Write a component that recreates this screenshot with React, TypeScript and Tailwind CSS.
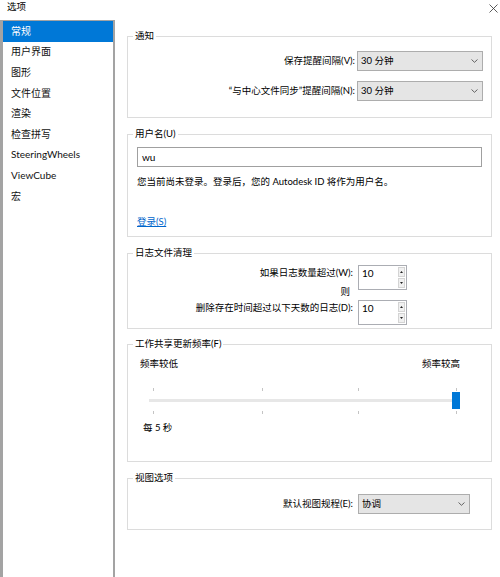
import { ReactNode } from "react";

const navItems = ["常规", "用户界面", "图形", "文件位置", "渲染", "检查拼写", "SteeringWheels", "ViewCube", "宏"];

function Chevron() {
  return (
    <svg width="7" height="4" viewBox="0 0 7 4" className="shrink-0">
      <path d="M0.5 0.5 L3.5 3.3 L6.5 0.5" fill="none" stroke="#555" strokeWidth="0.9" />
    </svg>
  );
}

function Combo({ value, className }: { value: string; className: string }) {
  return (
    <div className={`flex h-[20px] items-center justify-between border border-[#adadad] bg-[#e5e5e5] pl-[3px] pr-[4px] ${className}`}>
      <span className="leading-[14px]">{value}</span>
      <Chevron />
    </div>
  );
}

function SpinBox({ value }: { value: string }) {
  return (
    <div className="flex h-[25px] w-[49px] border border-[#abadb3] bg-white">
      <span className="flex-1 pl-[3px] text-[10px] leading-[14px]">{value}</span>
      <div className="my-[1px] mr-[1px] flex w-[7px] flex-col gap-[1px]">
        <div className="flex flex-1 items-center justify-center border border-[#d4d4d4] bg-[#f0f0f0]">
          <svg width="3" height="2" viewBox="0 0 3 2">
            <path d="M0 2 L1.5 0 L3 2 Z" fill="#222" />
          </svg>
        </div>
        <div className="flex flex-1 items-center justify-center border border-[#d4d4d4] bg-[#f0f0f0]">
          <svg width="3" height="2" viewBox="0 0 3 2">
            <path d="M0 0 L1.5 2 L3 0 Z" fill="#222" />
          </svg>
        </div>
      </div>
    </div>
  );
}

function Group({ title, className = "", children }: { title: string; className?: string; children: ReactNode }) {
  return (
    <fieldset className={`border border-[#dcdcdc] ${className}`}>
      <legend className="ml-[5px] px-[2px] leading-[14px]">{title}</legend>
      {children}
    </fieldset>
  );
}

const ticks = [4, 113, 209, 307];

export default function App() {
  return (
    <div className="flex h-[577px] w-[500px] flex-col overflow-hidden bg-white text-[9.5px] text-black font-['Lato','Noto_Sans_CJK_SC',sans-serif]">
      <div className="flex h-[20px] shrink-0 items-start justify-between">
        <span className="pl-[7px] leading-[14px]">选项</span>
        <svg width="9" height="9" viewBox="0 0 9 9" className="mr-[2px] mt-[4px]">
          <path d="M0.5 0.5 L8.5 8.5 M8.5 0.5 L0.5 8.5" stroke="#333" strokeWidth="0.8" />
        </svg>
      </div>

      <div className="flex min-h-0 flex-1">
        <aside className="w-[115px] shrink-0 border-t border-r-2 border-l-[3px] border-[#a3a3a3]">
          {navItems.map((item, i) => (
            <div
              key={item}
              className={`flex h-[20.6px] items-center pl-[8px] text-[10px] ${i === 0 ? "bg-[#0078d7] text-white" : "text-[#111]"}`}
            >
              {item}
            </div>
          ))}
        </aside>

        <main className="flex-1 pt-[9px] pr-[8px] pl-[12px]">
          <Group title="通知">
            <div className="flex flex-col gap-[10px] pt-[8px] pb-[16px]">
              <div className="flex items-center">
                <span className="w-[227px] text-right leading-[14px]">保存提醒间隔(V):</span>
                <Combo value="30 分钟" className="ml-[2px] w-[126px]" />
              </div>
              <div className="flex items-center">
                <span className="w-[227px] text-right leading-[14px]">“与中心文件同步”提醒间隔(N):</span>
                <Combo value="30 分钟" className="ml-[2px] w-[126px]" />
              </div>
            </div>
          </Group>

          <Group title="用户名(U)" className="mt-[9px]">
            <div className="flex flex-col px-[9px] pt-[6px] pb-[7px]">
              <div className="flex h-[20px] items-center border border-[#a0a0a0] bg-white pl-[4px] text-[10px]">wu</div>
              <p className="mt-[8px] leading-[14px]">您当前尚未登录。登录后，您的 Autodesk ID 将作为用户名。</p>
              <a className="mt-[26px] self-start leading-[14px] text-[#0066cc] underline">登录(S)</a>
            </div>
          </Group>

          <Group title="日志文件清理" className="mt-[9px]">
            <div className="flex pt-[5px] pb-[3px]">
              <div className="flex w-[225px] flex-col items-end pt-[1px]">
                <span className="leading-[14px]">如果日志数量超过(W):</span>
                <span className="mt-[5px] pr-[3px] leading-[14px]">则</span>
                <span className="mt-[2px] leading-[14px]">删除存在时间超过以下天数的日志(D):</span>
              </div>
              <div className="ml-[5px] flex flex-col gap-[10px]">
                <SpinBox value="10" />
                <SpinBox value="10" />
              </div>
            </div>
          </Group>

          <Group title="工作共享更新频率(F)" className="mt-[8px]">
            <div className="flex flex-col pt-[6px] pb-[26px]">
              <div className="flex justify-between pr-[31px] pl-[12px] leading-[14px]">
                <span>频率较低</span>
                <span>频率较高</span>
              </div>
              <div className="relative mt-[17px] ml-[21px] h-[26px] w-[311px]">
                {ticks.map((x) => (
                  <span key={`t${x}`} className="absolute top-0 h-[3px] w-px bg-[#c4c4c4]" style={{ left: x }} />
                ))}
                <div className="absolute top-[11px] left-0 h-[3px] w-[305px] bg-[#e7e7e7]" />
                <div className="absolute top-[4px] left-[303px] h-[17px] w-[8px] bg-[#0078d7]" />
                {ticks.map((x) => (
                  <span key={`b${x}`} className="absolute top-[23px] h-[3px] w-px bg-[#c4c4c4]" style={{ left: x }} />
                ))}
              </div>
              <span className="mt-[7px] pl-[15px] leading-[14px]">每 5 秒</span>
            </div>
          </Group>

          <Group title="视图选项" className="mt-[9px]">
            <div className="flex items-center pt-[9px] pb-[15px]">
              <span className="w-[225px] text-right leading-[14px]">默认视图规程(E):</span>
              <Combo value="协调" className="ml-[5px] w-[112px]" />
            </div>
          </Group>
        </main>
      </div>
    </div>
  );
}
